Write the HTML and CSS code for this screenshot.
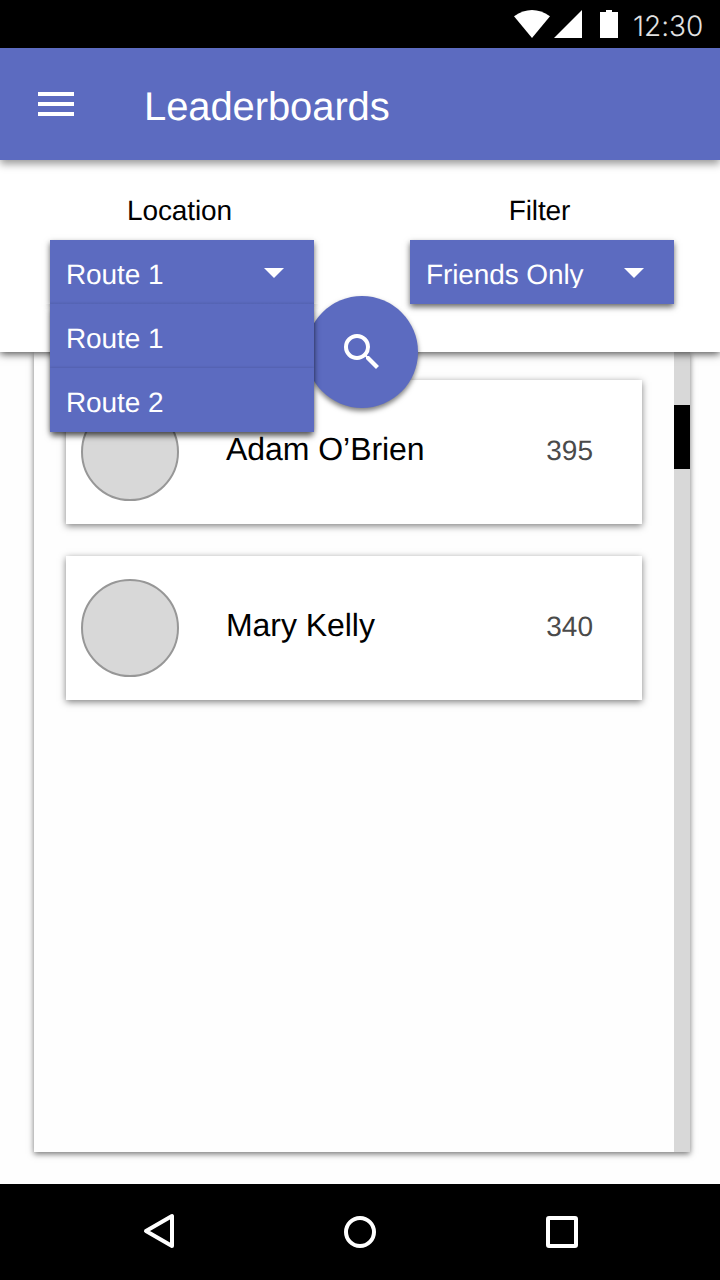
FILE: index.html
```html
<!DOCTYPE html>
<html lang="en">
<head>
<meta charset="utf-8">
<title>Leaderboards</title>
<link rel="stylesheet" href="styles.css">
</head>
<body>
<div class="screen">
  <div class="status-bar">
    <svg class="status-icons" width="104" height="28" viewBox="0 0 104 28">
      <path d="M0 6.3Q18-6.3 36 6.3L18 28Z"/>
      <path d="M40 28L68 0V28Z"/>
      <path d="M86 2H92V0H98V2H104V28H86Z"/>
    </svg>
    <span class="clock">12:30</span>
  </div>
  <header class="app-bar">
    <svg class="menu-icon" width="36" height="24" viewBox="0 0 36 24"><path d="M0 0H36V4H0ZM0 10H36V14H0ZM0 20H36V24H0Z"/></svg>
    <h1 class="title">Leaderboards</h1>
  </header>
  <section class="controls">
    <div class="field">
      <label class="label">Location</label>
      <div class="select select-open">
        <span class="value">Route 1</span>
        <svg class="arrow" width="20" height="10" viewBox="0 0 20 10"><path d="M0 0H20L10 10Z"/></svg>
        <div class="menu">
          <div class="option">Route 1</div>
          <div class="option">Route 2</div>
        </div>
      </div>
    </div>
    <div class="field">
      <label class="label">Filter</label>
      <div class="select">
        <span class="value value-clipped">Friends Only</span>
        <svg class="arrow" width="20" height="10" viewBox="0 0 20 10"><path d="M0 0H20L10 10Z"/></svg>
      </div>
    </div>
    <button class="fab" aria-label="Search">
      <svg class="search-icon" width="48" height="48" viewBox="0 0 24 24"><path d="M15.5 14h-.79l-.28-.27A6.471 6.471 0 0 0 16 9.5 6.5 6.5 0 1 0 9.500 16c1.610 0 3.090-.59 4.230-1.570l.27.28v.79l5 4.990L20.490 19l-4.990-5zm-6 0C7.010 14 5 11.990 5 9.500S7.010 5 9.500 5 14 7.010 14 9.500 11.990 14 9.500 14z"/></svg>
    </button>
  </section>
  <main class="content">
    <div class="panel">
      <div class="list">
        <div class="card"><div class="avatar"></div><span class="name">Adam O’Brien</span><span class="score">395</span></div>
        <div class="card"><div class="avatar"></div><span class="name">Mary Kelly</span><span class="score">340</span></div>
      </div>
      <div class="scrollbar"><div class="thumb"></div></div>
    </div>
  </main>
  <nav class="nav-bar">
    <svg width="34" height="38" viewBox="0 0 34 38"><path d="M4 18L30 3V33Z"/></svg>
    <svg width="34" height="34" viewBox="0 0 34 34"><circle cx="17" cy="17" r="14"/></svg>
    <svg width="34" height="34" viewBox="0 0 34 34"><rect x="3" y="3" width="28" height="28" rx="1"/></svg>
  </nav>
</div>
</body>
</html>
```

FILE: styles.css
```css
* { box-sizing: border-box; }

body {
  margin: 0;
  background: #fefefe;
  color: #000;
  font-family: "Liberation Sans", Arial, sans-serif;
  text-rendering: geometricPrecision;
}

.screen {
  display: flex;
  flex-direction: column;
  width: 720px;
  height: 1280px;
  overflow: hidden;
}

.status-bar {
  display: flex;
  flex: 0 0 48px;
  justify-content: flex-end;
  background: #000;
  padding: 10px 13px 0 0;
}

.status-icons { fill: #fff; margin-right: 15px; }

.clock {
  width: 74px;
  color: #e2e2e2;
  font: 300 28px/32px Inter, sans-serif;
  font-feature-settings: "calt" 0;
}

.app-bar {
  display: flex;
  flex: 0 0 112px;
  align-items: center;
  gap: 68px;
  position: relative;
  z-index: 3;
  background: #5c6bc0;
  padding-left: 38px;
  box-shadow: 0 4px 8px rgba(0, 0, 0, .4);
}

.menu-icon { fill: #fff; }

.title {
  margin: 6px 0 0;
  padding-left: 2px;
  color: #fff;
  font-size: 40px;
  font-weight: 400;
  letter-spacing: -.1px;
  line-height: 46px;
}

.controls {
  display: flex;
  flex: 0 0 192px;
  justify-content: space-between;
  position: relative;
  z-index: 2;
  background: #fff;
  padding: 32px 46px 0 50px;
  box-shadow: 0 2px 8px rgba(0, 0, 0, .7);
}

.field { width: 264px; }

.label {
  display: block;
  height: 48px;
  padding: 2px 5px 0 0;
  text-align: center;
  font-size: 28px;
  letter-spacing: -.1px;
  line-height: 34px;
}

.select {
  display: flex;
  justify-content: space-between;
  position: relative;
  z-index: 2;
  height: 64px;
  padding: 18px 30px 0 16px;
  background: #5c6bc0;
  color: #fff;
  font-size: 28px;
  letter-spacing: -.1px;
  line-height: 34px;
  box-shadow: 0 3px 6px rgba(0, 0, 0, .6);
}

.select-open { background: linear-gradient(#5c6bc0 61px, #5463b2 64px); }

.value-clipped { height: 30px; overflow: hidden; }

.arrow { fill: #fff; margin-top: 10px; }

.menu {
  position: absolute;
  top: 64px;
  left: 0;
  width: 264px;
  box-shadow: 0 5px 6px -1px rgba(0, 0, 0, .6), 0 0 6px rgba(0, 0, 0, .3);
  clip-path: inset(0 -20px -20px -20px);
}

.option {
  height: 64px;
  padding: 18px 16px 0;
  background: #5c6bc0;
  box-shadow: 0 -1px 2px rgba(0, 0, 0, .1);
}

.fab {
  display: grid;
  place-items: center;
  position: absolute;
  left: 306px;
  top: 136px;
  width: 112px;
  height: 112px;
  padding: 0;
  border: 0;
  border-radius: 50%;
  background: #5c6bc0;
  box-shadow: 0 3px 5px rgba(0, 0, 0, .5);
}

.search-icon { fill: #fff; }

.content {
  flex: 1;
  background: #fefefe;
  padding: 0 30px 32px 34px;
}

.panel {
  display: flex;
  height: 100%;
  background: #fefefe;
  box-shadow: 0 2px 6px rgba(0, 0, 0, .55);
}

.list {
  display: flex;
  flex: 1;
  flex-direction: column;
  gap: 32px;
  padding: 28px 32px 0;
}

.card {
  display: flex;
  height: 144px;
  padding: 23px 49px 0 15px;
  background: #fff;
  box-shadow: 0 2px 7px rgba(0, 0, 0, .5);
}

.avatar {
  width: 98px;
  height: 98px;
  border: 2px solid #979797;
  border-radius: 50%;
  background: #d8d8d8;
}

.name {
  flex: 1;
  margin: 28px 0 0 47px;
  font-size: 32px;
  letter-spacing: -.05px;
  line-height: 37px;
}

.score {
  margin-top: 32px;
  color: #4a4a4a;
  font-size: 28px;
  line-height: 32px;
}

.scrollbar {
  width: 16px;
  padding-top: 53px;
  background: #d8d8d8;
}

.thumb {
  height: 64px;
  background: #000;
}

.nav-bar {
  display: flex;
  flex: 0 0 96px;
  align-items: center;
  justify-content: space-between;
  background: #000;
  padding: 0 141px 0 142px;
  fill: none;
  stroke: #fff;
  stroke-width: 4;
  stroke-linejoin: round;
}

.nav-bar svg:nth-child(2) { margin-right: 1px; }
```
